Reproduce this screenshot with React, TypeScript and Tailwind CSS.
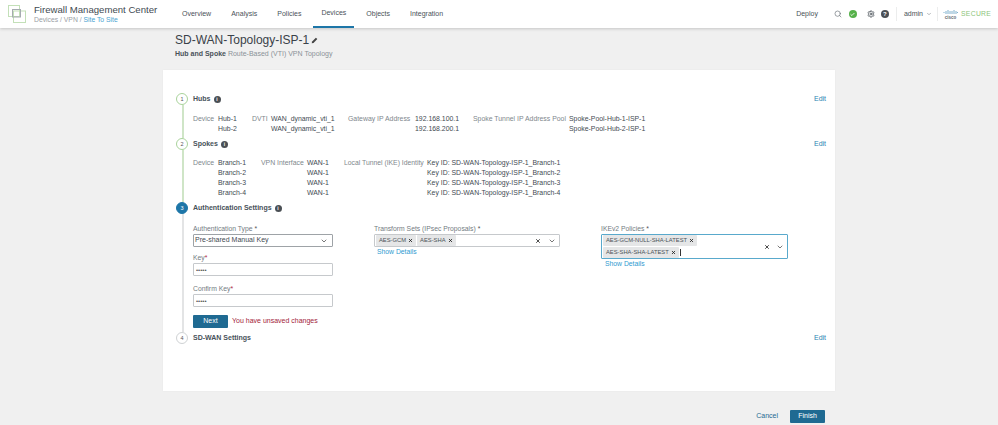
import { ChevronDown, Search, Check, Settings, X } from 'lucide-react'

const font = { fontFamily: '"Liberation Sans", Arial, sans-serif' }

function Info({ className = '' }: { className?: string }) {
  return (
    <span className={`inline-flex w-[7px] h-[7px] rounded-full bg-[#4a4f54] text-white text-[5px] leading-none items-center justify-center font-bold ${className}`}>i</span>
  )
}

function StepHead({ n, title, active, edit }: { n: number; title: string; active?: boolean; edit?: boolean }) {
  return (
    <div className="flex items-center h-[12px]">
      <div className={`w-[12px] h-[12px] rounded-full flex items-center justify-center text-[5.5px] shrink-0 border ${active ? 'bg-[#1d76a8] border-[#1d76a8] text-white' : n === 4 ? 'bg-white border-[#cfd2d4] text-[#555]' : 'bg-white border-[#a9d39b] text-[#555]'}`}>{n}</div>
      <span className="ml-[5px] text-[7px] font-semibold text-[#48525a]">{title}</span>
      {n !== 4 && <Info className="ml-[3px]" />}
      <span className="flex-1" />
      {edit && <span className="text-[7px] text-[#2a84b3] w-[11px] mr-[10px]">Edit</span>}
    </div>
  )
}

function Chip({ label }: { label: string }) {
  return (
    <span className="inline-flex items-center h-[11px] bg-[#e5e6e7] rounded-[1px] px-[3px] text-[5.8px] text-[#4c5359] whitespace-nowrap">
      {label}
      <X className="w-[5px] h-[5px] ml-[2px] text-[#222]" strokeWidth={4} />
    </span>
  )
}

function Field({ label, red, children }: { label: string; red?: boolean; children: React.ReactNode }) {
  return (
    <div>
      <div className="text-[6.8px] leading-[8px] text-[#737b82] mb-[1px]">{label}<span className={red ? 'text-[#b3263c]' : 'text-[#555]'}>*</span></div>
      {children}
    </div>
  )
}

function Dots() {
  return <div className="h-[13px] w-[140px] bg-white border border-[#c6c9cc] rounded-[1px] flex items-center pl-[2px] text-[6px] text-[#555] leading-none">•••••</div>
}

const hubs = [
  ['Device', 'Hub-1', 'DVTI', 'WAN_dynamic_vti_1', 'Gateway IP Address', '192.168.100.1', 'Spoke Tunnel IP Address Pool', 'Spoke-Pool-Hub-1-ISP-1'],
  ['', 'Hub-2', '', 'WAN_dynamic_vti_1', '', '192.168.200.1', '', 'Spoke-Pool-Hub-2-ISP-1'],
]
const branches = ['1', '2', '3', '4']
const nav = ['Overview', 'Analysis', 'Policies', 'Devices', 'Objects', 'Integration']

export default function App() {
  return (
    <div className="w-[998px] h-[425px] overflow-hidden bg-[#f0f0f0] flex flex-col" style={font}>
      <header className="h-[28px] bg-white shadow-[0_1px_3px_rgba(0,0,0,0.18)] flex items-center shrink-0 relative">
        <svg className="ml-[8px] w-[18px] h-[18px]" viewBox="0 0 18 18" fill="none">
          <rect x="0.5" y="0.5" width="11" height="11" stroke="#c3e0b8" />
          <rect x="5.5" y="6" width="12" height="11.5" stroke="#c3e0b8" />
          <rect x="4.5" y="4.5" width="8" height="7.5" stroke="#a5abb0" />
        </svg>
        <div className="ml-[8px] w-[140px]">
          <div className="text-[9.6px] leading-[12px] text-[#3f4a52]">Firewall Management Center</div>
          <div className="text-[6.8px] leading-[8px] text-[#9aa0a5]">Devices / VPN / <span className="text-[#4aa3d0]">Site To Site</span></div>
        </div>
        <nav className="flex h-full">
          {nav.map(n => (
            <div key={n} className={`h-full flex items-center px-[8px] mr-[4px] text-[7px] text-[#4a5259] ${n === 'Devices' ? 'border-b-2 border-[#1d76a8]' : ''}`}>{n}</div>
          ))}
        </nav>
        <span className="flex-1" />
        <span className="text-[7px] text-[#4a5259]">Deploy</span>
        <Search className="w-[8px] h-[8px] ml-[16px] text-[#6b7278]" strokeWidth={2} />
        <span className="ml-[7px] w-[8px] h-[8px] rounded-full bg-[#56b14a] flex items-center justify-center"><Check className="w-[5px] h-[5px] text-white" strokeWidth={4} /></span>
        <Settings className="ml-[10px] w-[8px] h-[8px] text-[#4a5259]" strokeWidth={2.5} />
        <span className="ml-[6px] w-[8px] h-[8px] rounded-full bg-[#4a4f54] text-white text-[6px] font-bold flex items-center justify-center">?</span>
        <span className="ml-[7px] w-px h-[14px] bg-[#eceded]" />
        <span className="ml-[7px] text-[7px] text-[#4a5259]">admin</span>
        <ChevronDown className="ml-[3px] w-[6px] h-[6px] text-[#6b7278]" />
        <span className="ml-[5px] w-px h-[14px] bg-[#eceded]" />
        <svg className="ml-[5px] w-[15px] h-[11px]" viewBox="0 0 15 11" stroke="#5d9cc0" strokeWidth="0.8">
          <path d="M1 3v1M3 2v3M5 1v4M7 2v3M9 2v3M11 1v4M13 2v3M14.5 3v1" />
          <text x="7.5" y="10" textAnchor="middle" fontSize="4.5" fill="#5d6870" stroke="none" fontWeight="700">cisco</text>
        </svg>
        <span className="ml-[3px] mr-[8px] w-[29px] whitespace-nowrap text-[6.8px] tracking-[0.3px] text-[#8cc47a]">SECURE</span>
      </header>

      <div className="pl-[175px] pt-[5px] h-[42px] shrink-0">
        <div className="flex items-center text-[12px] leading-[15px] text-[#3a4249]">
          SD-WAN-Topology-ISP-1
          <svg className="ml-[2px] w-[7px] h-[7px]" viewBox="0 0 10 10" fill="#444"><path d="M1 9l.6-2.6L7 1l2 2-5.4 5.4z" /></svg>
        </div>
        <div className="text-[7px] leading-[9px] mt-[1px] text-[#8b9298]"><span className="font-semibold text-[#4a5259]">Hub and Spoke</span> Route-Based (VTI) VPN Topology</div>
      </div>

      <main className="ml-[163px] w-[672px] h-[321px] bg-white shrink-0 pl-[13px] pr-0 pt-[23px] shadow-[0_0_2px_rgba(0,0,0,0.04)]">
        <StepHead n={1} title="Hubs" edit />
        <div className="ml-[6px] border-l-2 border-[#cfe5c7] pl-[9px] pt-[9px] h-[33px] text-[6.9px] leading-[9.8px] text-[#3f4a52]">
          {hubs.map((r, i) => (
            <div key={i} className="grid grid-cols-[25px_34px_19px_77px_67px_58px_96px_auto]">
              {r.map((c, j) => <span key={j} className={j % 2 === 0 ? 'text-[#80878d]' : ''}>{c}</span>)}
            </div>
          ))}
        </div>
        <StepHead n={2} title="Spokes" edit />
        <div className="ml-[6px] border-l-2 border-[#cfe5c7] pl-[9px] pt-[8px] h-[52px] text-[6.9px] leading-[9.9px] text-[#3f4a52]">
          {branches.map(b => (
            <div key={b} className="grid grid-cols-[25px_43px_46px_37px_83px_auto]">
              <span className="text-[#80878d]">{b === '1' ? 'Device' : ''}</span>
              <span>Branch-{b}</span>
              <span className="text-[#80878d]">{b === '1' ? 'VPN Interface' : ''}</span>
              <span>WAN-1</span>
              <span className="text-[#80878d] text-[6.8px] whitespace-nowrap">{b === '1' ? 'Local Tunnel (IKE) Identity' : ''}</span>
              <span>Key ID: SD-WAN-Topology-ISP-1_Branch-{b}</span>
            </div>
          ))}
        </div>
        <StepHead n={3} title="Authentication Settings" active />
        <div className="ml-[6px] border-l-2 border-[#e3e4e5] pl-[9px] pt-[11px] h-[118px] flex items-start">
          <div className="w-[181px] flex flex-col">
            <Field label="Authentication Type ">
              <div className="h-[13px] w-[140px] bg-white border border-[#9ea3a7] rounded-[1px] flex items-center pl-[1px] pr-[4px] text-[7px] text-[#3f4a52]">
                Pre-shared Manual Key
                <span className="flex-1" />
                <ChevronDown className="w-[8px] h-[8px] text-[#333]" />
              </div>
            </Field>
            <div className="mt-[7px]"><Field label="Key" red><Dots /></Field></div>
            <div className="mt-[9px]"><Field label="Confirm Key" red><Dots /></Field></div>
            <div className="flex items-center mt-[8px]">
              <button className="w-[35px] h-[13px] bg-[#1f6a92] rounded-[1px] text-white text-[7px]">Next</button>
              <span className="ml-[4px] text-[7px] text-[#a3233a] whitespace-nowrap">You have unsaved changes</span>
            </div>
          </div>
          <div className="w-[227px]">
            <Field label="Transform Sets (IPsec Proposals) ">
              <div className="w-[186px] h-[13px] bg-white border border-[#c6c9cc] rounded-[1px] flex items-center pl-[1px] gap-[1px]">
                <Chip label="AES-GCM" />
                <Chip label="AES-SHA" />
                <span className="flex-1" />
                <X className="w-[6px] h-[6px] text-[#333]" strokeWidth={3.5} />
                <ChevronDown className="w-[8px] h-[8px] ml-[6px] mr-[3px] text-[#333]" />
              </div>
            </Field>
            <div className="ml-[3px] text-[6.8px] leading-[9px] text-[#2f9bd0]">Show Details</div>
          </div>
          <div className="w-[187px]">
            <Field label="IKEv2 Policies ">
              <div className="w-[187px] h-[25px] bg-white border border-[#59a9cc] rounded-[1px] flex items-center pl-[1px]">
                <div className="flex flex-col gap-[1px]">
                  <div className="flex"><Chip label="AES-GCM-NULL-SHA-LATEST" /></div>
                  <div className="flex items-center"><Chip label="AES-SHA-SHA-LATEST" /><span className="ml-[1px] w-px h-[7px] bg-[#333]" /></div>
                </div>
                <span className="flex-1" />
                <X className="w-[6px] h-[6px] text-[#333]" strokeWidth={3.5} />
                <ChevronDown className="w-[8px] h-[8px] ml-[6px] mr-[3px] text-[#333]" />
              </div>
            </Field>
            <div className="ml-[4px] text-[6.8px] leading-[9px] text-[#2f9bd0]">Show Details</div>
          </div>
        </div>
        <StepHead n={4} title="SD-WAN Settings" edit />
      </main>

      <footer className="flex items-center justify-end pr-[173px] pt-[19px]">
        <span className="text-[7px] text-[#1f6a92] mr-[12px]">Cancel</span>
        <button className="w-[35px] h-[13px] bg-[#1f6a92] rounded-[1px] text-white text-[7px]">Finish</button>
      </footer>
    </div>
  )
}
